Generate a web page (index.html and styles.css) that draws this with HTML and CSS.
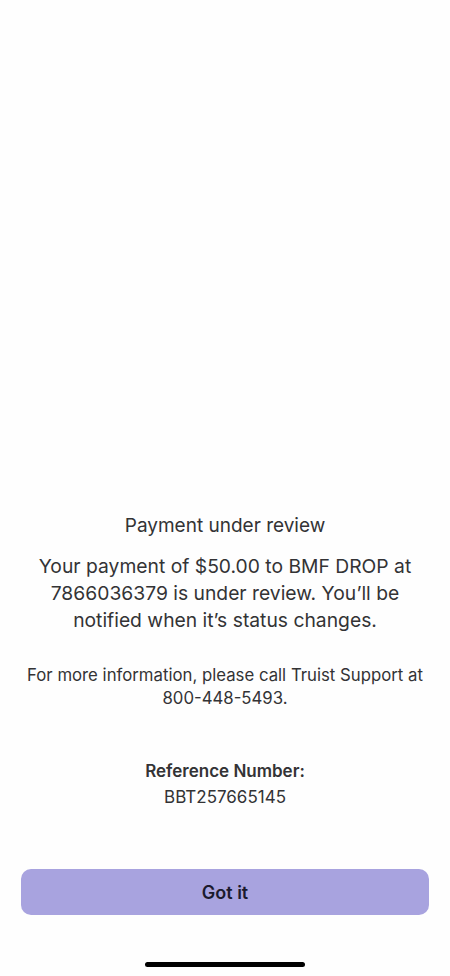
FILE: index.html
```html
<!DOCTYPE html>
<html lang="en">
<head>
  <meta charset="UTF-8">
  <meta name="viewport" content="width=device-width, initial-scale=1.0">
  <title>Payment under review</title>
  <link rel="stylesheet" href="styles.css">
</head>
<body>

  <div class="screen">
    <!-- Message -->
    <main class="message">
      <h1 class="title">Payment under review</h1>
      <p class="lead">Your payment of $50.00 to BMF DROP at 7866036379 is under review. You’ll be notified when it’s status changes.</p>
      <p class="info">For more information, please call Truist Support at 800-448-5493.</p>

      <div class="reference">
        <p class="reference-label">Reference Number:</p>
        <p class="reference-value">BBT257665145</p>
      </div>
    </main>

    <!-- Action -->
    <button class="got-it" type="button">Got it</button>

    <div class="home-indicator"></div>
  </div>

</body>
</html>
```

FILE: styles.css
```css
/* Global Styles */
body {
  margin: 0;
  background: #fefefe;
  font-family: 'Inter', 'Liberation Sans', sans-serif;
  color: #333335;
}

.screen {
  height: 976px;
  display: flex;
  flex-direction: column;
  padding: 0 21px 9px;
  box-sizing: border-box;
}

.message {
  flex: 1;
  display: flex;
  flex-direction: column;
  justify-content: flex-end;
  text-align: center;
}

.message p,
.title {
  margin: 0;
}

.title {
  font-size: 19px;
  line-height: 24px;
  font-weight: 400;
}

.lead {
  margin-top: 15px !important;
  font-size: 19.3px;
  line-height: 27px;
  padding: 0 8px;
}

.info {
  margin-top: 30px !important;
  font-size: 16.75px;
  line-height: 23px;
}

/* Reference */
.reference {
  margin-top: 48px;
  font-size: 17px;
  line-height: 26px;
}

.reference-label {
  font-weight: 600;
}

/* Button */
.got-it {
  margin-top: 59px;
  height: 46px;
  width: 100%;
  border: none;
  border-radius: 10px;
  background: #a8a3df;
  color: #1b1a2e;
  font-family: inherit;
  font-size: 18px;
  font-weight: 600;
  cursor: pointer;
}

.home-indicator {
  width: 160px;
  height: 5px;
  margin: 47px auto 0;
  border-radius: 3px;
  background: #000;
}
```
